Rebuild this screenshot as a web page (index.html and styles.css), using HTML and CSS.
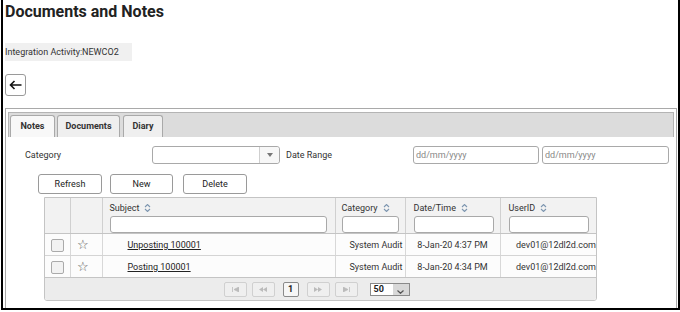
FILE: index.html
```html
<!DOCTYPE html>
<html lang="en">
<head>
    <meta charset="UTF-8">
    <meta name="viewport" content="width=device-width, initial-scale=1.0">
    <title>Documents and Notes</title>
    <link rel="stylesheet" href="styles.css">
</head>
<body>
    <div class="frame">
        <h1>Documents and Notes</h1>
        <div class="info">Integration Activity:NEWCO2</div>
        <button class="back-button" title="Back">
            <svg width="13" height="10" viewBox="0 0 13 10"><path d="M12.5 5H1.5M5.5 1L1.5 5l4 4" fill="none" stroke="#111" stroke-width="1.6"/></svg>
        </button>

        <div class="panel">
            <div class="tab-bar">
                <div class="tab active">Notes</div>
                <div class="tab">Documents</div>
                <div class="tab">Diary</div>
            </div>

            <div class="filter-row">
                <label class="filter-label">Category</label>
                <div class="select-box">
                    <span class="select-value"></span>
                    <span class="select-arrow"><svg width="6" height="4" viewBox="0 0 6 4"><path d="M0 0h6L3 4z" fill="#777"/></svg></span>
                </div>
                <label class="filter-label date-label">Date Range</label>
                <input type="text" class="date-input" placeholder="dd/mm/yyyy">
                <input type="text" class="date-input second" placeholder="dd/mm/yyyy">
            </div>

            <div class="button-row">
                <button class="btn btn-refresh">Refresh</button>
                <button class="btn btn-new">New</button>
                <button class="btn btn-delete">Delete</button>
            </div>

            <div class="grid-wrap">
                <table class="grid">
                    <colgroup>
                        <col style="width:25px">
                        <col style="width:32px">
                        <col style="width:233px">
                        <col style="width:70px">
                        <col style="width:95px">
                        <col style="width:96px">
                    </colgroup>
                    <thead>
                        <tr>
                            <th></th>
                            <th></th>
                            <th class="col-subject">
                                <div class="th-label">Subject <svg class="sort" width="7" height="8" viewBox="0 0 7 8"><path d="M1 3l2.5-2.5L6 3M1 5l2.5 2.5L6 5" fill="none" stroke="#7d96b0" stroke-width="1.1"/></svg></div>
                                <input type="text" class="th-filter">
                            </th>
                            <th class="col-category">
                                <div class="th-label">Category <svg class="sort" width="7" height="8" viewBox="0 0 7 8"><path d="M1 3l2.5-2.5L6 3M1 5l2.5 2.5L6 5" fill="none" stroke="#7d96b0" stroke-width="1.1"/></svg></div>
                                <input type="text" class="th-filter">
                            </th>
                            <th class="col-date">
                                <div class="th-label">Date/Time <svg class="sort" width="7" height="8" viewBox="0 0 7 8"><path d="M1 3l2.5-2.5L6 3M1 5l2.5 2.5L6 5" fill="none" stroke="#7d96b0" stroke-width="1.1"/></svg></div>
                                <input type="text" class="th-filter">
                            </th>
                            <th class="col-user">
                                <div class="th-label">UserID <svg class="sort" width="7" height="8" viewBox="0 0 7 8"><path d="M1 3l2.5-2.5L6 3M1 5l2.5 2.5L6 5" fill="none" stroke="#7d96b0" stroke-width="1.1"/></svg></div>
                                <input type="text" class="th-filter">
                            </th>
                        </tr>
                    </thead>
                    <tbody>
                        <tr>
                            <td class="cell-check"><span class="check"></span></td>
                            <td class="cell-star">&#9734;</td>
                            <td class="cell-subject"><a href="#">Unposting 100001</a></td>
                            <td class="cell-category">System Audit</td>
                            <td class="cell-date">8-Jan-20 4:37 PM</td>
                            <td class="cell-user">dev01@12dl2d.com</td>
                        </tr>
                        <tr>
                            <td class="cell-check"><span class="check"></span></td>
                            <td class="cell-star">&#9734;</td>
                            <td class="cell-subject"><a href="#">Posting 100001</a></td>
                            <td class="cell-category">System Audit</td>
                            <td class="cell-date">8-Jan-20 4:34 PM</td>
                            <td class="cell-user">dev01@12dl2d.com</td>
                        </tr>
                    </tbody>
                </table>
                <div class="pager">
                    <span class="pg-btn"><svg width="7" height="5" viewBox="0 0 7 5"><path d="M0.5 0v5M7 0L2 2.5 7 5z" fill="#bbb" stroke="#bbb" stroke-width="0.8"/></svg></span>
                    <span class="pg-btn"><svg width="8" height="5" viewBox="0 0 8 5"><path d="M4 0L0 2.5 4 5zM8 0L4 2.5 8 5z" fill="#bbb"/></svg></span>
                    <span class="pg-page">1</span>
                    <span class="pg-btn"><svg width="8" height="5" viewBox="0 0 8 5"><path d="M0 0l4 2.5L0 5zM4 0l4 2.5L4 5z" fill="#bbb"/></svg></span>
                    <span class="pg-btn"><svg width="7" height="5" viewBox="0 0 7 5"><path d="M6.5 0v5M0 0l5 2.5L0 5z" fill="#bbb" stroke="#bbb" stroke-width="0.8"/></svg></span>
                    <span class="pg-size">50<span class="pg-size-arrow"><svg width="7" height="4" viewBox="0 0 7 4"><path d="M0.5 0.5L3.5 3.3L6.5 0.5" fill="none" stroke="#555" stroke-width="1.2"/></svg></span></span>
                </div>
            </div>
        </div>
    </div>
</body>
</html>
```

FILE: styles.css
```css
body {
    margin: 0;
    background: #fff;
    font-family: 'Roboto', 'Liberation Sans', sans-serif;
    font-size: 9px;
    color: #333;
}

.frame {
    margin-left: 1px;
    width: 673px;
    height: 308px;
    border: 2px solid #000;
    border-top: none;
    padding-left: 2px;
    box-sizing: content-box;
    overflow: hidden;
}

h1 {
    margin: 0;
    padding-top: 2px;
    font-size: 16px;
    line-height: 19px;
    font-weight: bold;
    color: #222;
}

.info {
    margin-top: 22px;
    width: 127px;
    height: 18px;
    line-height: 18px;
    background: #f0f0f0;
    color: #333;
}

.back-button {
    display: flex;
    align-items: center;
    justify-content: center;
    margin-top: 13px;
    width: 21px;
    height: 22px;
    padding: 0;
    background: #fff;
    border: 1px solid #9a9a9a;
    border-radius: 3px;
}

.panel {
    margin-top: 12px;
    width: 672px;
    height: 210px;
    border: 1px solid #a9a9a9;
    border-bottom: none;
    padding: 3px 2px 0 2px;
    box-sizing: border-box;
}

.tab-bar {
    display: flex;
    align-items: flex-end;
    gap: 2px;
    height: 25px;
    padding-left: 1px;
    background: #dcdcdc;
    border: 1px solid #b4b4b4;
    border-bottom: none;
    box-sizing: border-box;
}

.tab {
    height: 21px;
    line-height: 21px;
    padding: 0;
    text-align: center;
    font-weight: bold;
    color: #333;
    background: #efefef;
    border: 1px solid #a9a9a9;
    border-bottom: none;
    border-radius: 3px 3px 0 0;
}

.tab:nth-child(1) { width: 43px; }
.tab:nth-child(2) { width: 61px; }
.tab:nth-child(3) { width: 38px; margin-left: 1px; }

.tab.active {
    background: #f8f8f8;
}

.filter-row {
    display: flex;
    align-items: center;
    margin-top: 9px;
    padding-left: 17px;
    height: 18px;
}

.filter-label {
    width: 127px;
}

.date-label {
    width: 127px;
    margin-left: 6px;
}

.select-box {
    display: flex;
    width: 128px;
    height: 18px;
    border: 1px solid #a9a9a9;
    border-radius: 3px;
    box-sizing: border-box;
    background: #fff;
}

.select-value {
    flex: 1;
}

.select-arrow {
    display: flex;
    align-items: center;
    justify-content: center;
    width: 19px;
    border-left: 1px solid #cfcfcf;
    background: #f7f7f7;
    border-radius: 0 3px 3px 0;
}

.date-input {
    width: 126px;
    height: 18px;
    padding: 0 0 0 2px;
    border: 1px solid #a9a9a9;
    border-radius: 3px;
    box-sizing: border-box;
    font-family: inherit;
    font-size: 9px;
    color: #333;
}

.date-input.second {
    width: 127px;
    margin-left: 3px;
}

.date-input::placeholder {
    color: #888;
}

.button-row {
    display: flex;
    margin-top: 10px;
    padding-left: 30px;
    height: 20px;
}

.btn {
    height: 20px;
    padding: 0;
    background: #fff;
    border: 1px solid #9a9a9a;
    border-radius: 3px;
    font-family: inherit;
    font-size: 9px;
    color: #222;
}

.btn-refresh { width: 64px; }
.btn-new { width: 63px; margin-left: 8px; }
.btn-delete { width: 64px; margin-left: 10px; }

.grid-wrap {
    margin-top: 3px;
    margin-left: 36px;
    width: 553px;
    border: 1px solid #c4c4c4;
    border-radius: 0 0 3px 3px;
    box-sizing: border-box;
    overflow: hidden;
}

.grid {
    width: 551px;
    border-collapse: collapse;
    table-layout: fixed;
}

.grid th {
    height: 35px;
    padding: 0 8px;
    vertical-align: top;
    text-align: left;
    font-weight: normal;
    color: #333;
    background: #f2f2f2;
    border-left: 1px solid #d0d0d0;
    border-bottom: 1px solid #c4c4c4;
}

.grid th:first-child,
.grid td:first-child {
    border-left: none;
}

.th-label {
    display: flex;
    align-items: center;
    gap: 5px;
    margin-top: 4px;
    height: 11px;
}

.th-filter {
    display: block;
    margin-top: 3px;
    width: 100%;
    height: 17px;
    padding: 0;
    border: 1px solid #a9a9a9;
    border-radius: 3px;
    box-sizing: border-box;
    background: #fff;
}

.grid th.col-subject { padding: 0 8px 0 7px; }
.grid th.col-category { padding: 0 6px 0 6px; }
.grid th.col-date { padding: 0 6px 0 8px; }
.grid th.col-user { padding: 0 7px 0 8px; }

.grid td {
    height: 21px;
    padding: 0;
    background: #fcfcfc;
    border-left: 1px solid #d8d8d8;
    border-bottom: 1px solid #d4d4d4;
    color: #333;
    white-space: nowrap;
    overflow: hidden;
}

.grid tbody tr:last-child td {
    border-bottom: 1px solid #c4c4c4;
}

.cell-check {
    text-align: center;
}

.check {
    display: inline-block;
    width: 13px;
    height: 13px;
    margin-top: 2px;
    vertical-align: middle;
    background: #f2f2f2;
    border: 1px solid #aaa;
    border-radius: 2px;
    box-sizing: border-box;
}

.grid td.cell-star {
    text-align: center;
    padding-right: 6px;
    font-size: 13px;
    color: #555;
}

.grid td.cell-subject {
    padding-left: 25px;
}

.cell-subject a {
    color: #222;
    text-decoration: underline;
}

.grid td.cell-category {
    text-align: right;
    padding-right: 2px;
}

.cell-date {
    text-align: center;
}

.cell-user {
    text-align: right;
}

.pager {
    display: flex;
    align-items: center;
    justify-content: center;
    gap: 5px;
    height: 22px;
    padding-right: 8px;
    background: #ececec;
}

.pg-btn {
    display: flex;
    align-items: center;
    justify-content: center;
    width: 21px;
    height: 13px;
    border: 1px solid #d0d0d0;
    border-radius: 2px;
    background: #efefef;
}

.pg-page {
    width: 14px;
    height: 13px;
    line-height: 13px;
    margin: 0 3px;
    text-align: center;
    font-weight: bold;
    color: #222;
    background: #f6f6f6;
    border: 1px solid #8a8a8a;
    border-radius: 2px;
}

.pg-size {
    display: flex;
    align-items: center;
    margin-left: 7px;
    width: 40px;
    height: 13px;
    padding-left: 3px;
    border: 1px solid #8a8a8a;
    box-sizing: border-box;
    font-weight: bold;
    color: #222;
    background: #fff;
}

.pg-size-arrow {
    display: flex;
    align-items: flex-end;
    justify-content: center;
    margin-left: auto;
    width: 16px;
    height: 11px;
    padding-bottom: 1px;
    box-sizing: border-box;
    background: #d8d8d8;
}
```
